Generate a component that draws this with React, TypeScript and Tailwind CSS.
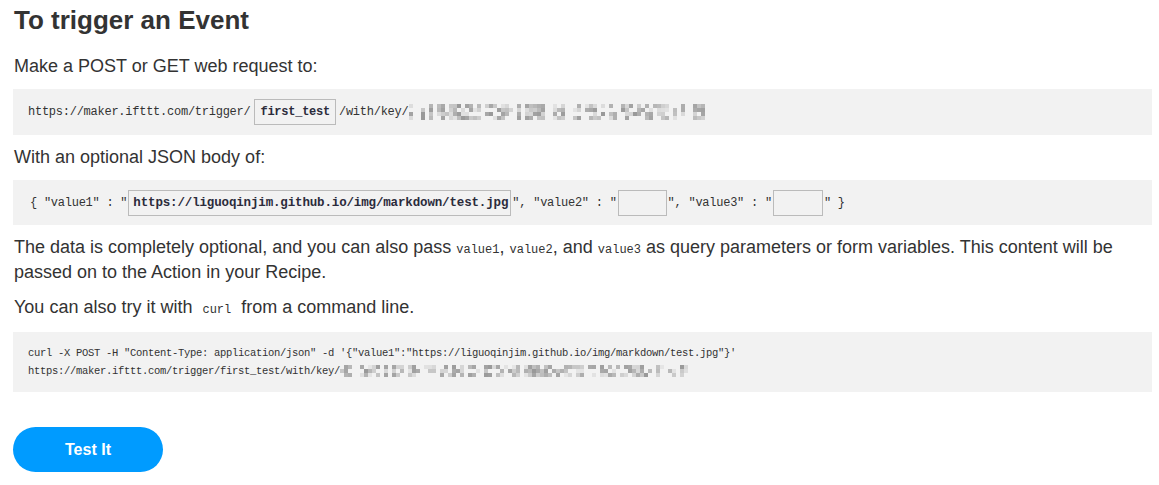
import React from "react";

const mono = "font-['Liberation_Mono','DejaVu_Sans_Mono',monospace]";
const inlineCode = `${mono} text-[12px] leading-[1]`;

function Blur({ width, height, seed }: { width: number; height: number; seed: number }) {
  // pixelated stand-in for the redacted key
  const cell = 4;
  const cols = Math.floor(width / cell);
  const rows = Math.floor(height / cell);
  let s = seed;
  const rnd = () => {
    s = (s * 9301 + 49297) % 233280;
    return s / 233280;
  };
  const rects = [];
  for (let c = 0; c < cols; c++) {
    const gap = rnd() < 0.18;
    for (let r = 0; r < rows; r++) {
      const v = rnd();
      if (gap || v < 0.3) continue;
      const g = Math.floor(120 + v * 110);
      rects.push(
        <rect key={c + "-" + r} x={c * cell} y={r * cell} width={cell} height={cell} fill={`rgb(${g},${g},${g})`} />
      );
    }
  }
  return (
    <svg width={width} height={height} className="inline-block align-middle">
      {rects}
    </svg>
  );
}

function Field({ value, w }: { value?: string; w: string }) {
  return (
    <span
      className={`inline-block ${w} h-[26px] border border-[#bbb] bg-[#f2f2f2] px-[4px] align-middle leading-[24px] font-bold text-[#2b2b3b] mx-[1px] text-[12.5px] tracking-[-0.15px]`}
    >
      {value}
    </span>
  );
}

export default function App() {
  return (
    <div className="w-[1159px] h-[485px] bg-white font-['Liberation_Sans',Arial,sans-serif] text-[#333]">
      <div className="ml-[13px] w-[1139px] pt-[4px]">
        <h1 className="text-[26px] font-bold leading-[32px] pl-[1px]">To trigger an Event</h1>

        <p className="mt-[18px] text-[18px] leading-[24px] pl-[1px]">Make a POST or GET web request to:</p>

        <div className={`mt-[11px] h-[46px] bg-[#f2f2f2] pl-[15px] flex items-center ${mono} text-[12px] tracking-[-0.25px] text-[#333]`}>
          <span>https://maker.ifttt.com/trigger/</span>
          <span className="ml-[4px] h-[26px] border border-[#bbb] px-[5px] leading-[24px] font-bold text-[#2b2b3b]">first_test</span>
          <span className="ml-[3px]">/with/key/</span>
          <span className="ml-[1px]">
            <Blur width={302} height={16} seed={17} />
          </span>
        </div>

        <p className="mt-[10px] text-[18px] leading-[24px] pl-[1px]">With an optional JSON body of:</p>

        <div className={`mt-[11px] h-[45px] bg-[#f2f2f2] pl-[17px] flex items-center whitespace-pre ${mono} text-[12px] tracking-[-0.25px]`}>
          <span>{"{ \u2033value1\u2033 : \u2033"}</span>
          <Field w="w-[383px]" value="https://liguoqinjim.github.io/img/markdown/test.jpg" />
          <span>{"\u2033, \u2033value2\u2033 : \u2033"}</span>
          <Field w="w-[49px]" />
          <span>{"\u2033, \u2033value3\u2033 : \u2033"}</span>
          <Field w="w-[50px]" />
          <span>{"\u2033 }"}</span>
        </div>

        <p className="mt-[10px] text-[18px] leading-[25px] pl-[1px]">
          The data is completely optional, and you can also pass <code className={inlineCode}>value1</code>,{" "}
          <code className={inlineCode}>value2</code>, and <code className={inlineCode}>value3</code> as query parameters or
          form variables. This content will be passed on to the Action in your Recipe.
        </p>

        <p className="mt-[10px] text-[18px] leading-[25px] pl-[1px]">
          You can also try it with <code className={`${inlineCode} px-[5px]`}>curl</code> from a command line.
        </p>

        <div className={`mt-[12px] h-[60px] bg-[#f2f2f2] pl-[15px] flex flex-col justify-center ${mono} text-[10.5px] tracking-[-0.3px] leading-[18px]`}>
          <div>{"curl -X POST -H \u2033Content-Type: application/json\u2033 -d '{\u2033value1\u2033:\u2033https://liguoqinjim.github.io/img/markdown/test.jpg\u2033}'"}</div>
          <div className="flex items-center">
            <span>https://maker.ifttt.com/trigger/first_test/with/key/</span>
            <Blur width={348} height={12} seed={53} />
          </div>
        </div>

        <button className="mt-[35px] w-[150px] h-[45px] rounded-full bg-[#009bff] text-white text-[16px] font-bold">
          Test It
        </button>
      </div>
    </div>
  );
}
